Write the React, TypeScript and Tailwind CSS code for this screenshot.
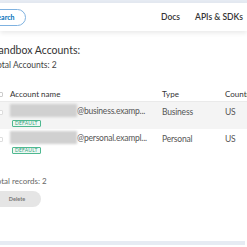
import React from "react";

type Account = {
  domain: string;
  type: string;
  country: string;
};

const ACCOUNTS: Account[] = [
  { domain: "@business.examp...", type: "Business", country: "US" },
  { domain: "@personal.exampl...", type: "Personal", country: "US" },
];

export default function App(): React.ReactElement {
  return (
    <div className="h-[247px] w-[247px] overflow-hidden bg-white font-['Lato',sans-serif] text-[#2c2e2f]">
      <div className="h-[3px] bg-[#e6ebf3]" />

      {/* Header */}
      <header className="relative z-10 flex h-[28px] items-center bg-white shadow-[0_2px_5px_rgba(0,0,0,0.09)]">
        <div className="-ml-[18px] flex h-[17px] w-[44px] items-center justify-center rounded-full border border-[#7fb2e0] text-[7px] font-bold text-[#0070ba]">
          Search
        </div>
        <nav className="ml-auto flex items-center gap-[15px] pr-[4px] text-[8.5px] font-semibold text-[#333]">
          <span>Docs</span>
          <span>APIs &amp; SDKs</span>
        </nav>
      </header>

      {/* Content */}
      <main className="-ml-[7px]">
        <h2 className="mt-[12px] text-[10.5px] leading-[14px] text-[#333]">Sandbox Accounts:</h2>
        <p className="mt-[2px] text-[8.5px] leading-[12px] text-[#444]">Total Accounts: 2</p>

        <table className="mt-[17px] w-[280px] border-collapse text-left">
          <thead>
            <tr className="border-b border-[#eaeaea] text-[8px] leading-[12px] text-[#333]">
              <th className="w-[17px] pb-[1px] pl-[5px] font-normal">
                <span className="block h-[5px] w-[5px] rounded-[1px] border border-[#ccc]" />
              </th>
              <th className="w-[152px] pb-[1px] font-normal">Account name</th>
              <th className="w-[63px] pb-[1px] font-normal">Type</th>
              <th className="pb-[1px] font-normal">Country</th>
            </tr>
          </thead>
          <tbody>
            {ACCOUNTS.map((acc, i) => (
              <tr
                key={acc.domain}
                className={`text-[8.5px] leading-[12px] tracking-[-0.2px] text-[#555] ${i === 0 ? "bg-[#f4f4f4]" : ""}`}
              >
                <td className="pl-[5px] pt-[8px] align-top">
                  <span className="block h-[5px] w-[5px] rounded-[1px] border border-[#ddd] bg-white" />
                </td>
                <td className="pb-[2px] pt-[2px] align-top">
                  <div className="flex items-center">
                    <span className="block h-[13px] w-[67px] bg-[#d0d0d0] blur-[1px]" />
                    <span>{acc.domain}</span>
                  </div>
                  <span className="ml-[2px] mt-[3px] block w-fit rounded-[1px] border border-[#4fb890] bg-[#eef8f4] px-[2px] text-[5px] leading-[5px] tracking-[0.2px] text-[#35a37d]">
                    DEFAULT
                  </span>
                </td>
                <td className="pt-[4px] align-top">{acc.type}</td>
                <td className="pt-[4px] align-top">{acc.country}</td>
              </tr>
            ))}
          </tbody>
        </table>

        <p className="mt-[19px] text-[8px] leading-[12px] text-[#666]">Total records: 2</p>
        <div className="mt-[4px] flex h-[16px] w-[48px] items-center justify-center rounded-full bg-[#e5e5e5] text-[5.5px] font-bold text-[#777]">
          Delete
        </div>
      </main>

      <div className="mt-[34px] h-[4px] w-[245px] bg-[#e6ebf3]" />
    </div>
  );
}
